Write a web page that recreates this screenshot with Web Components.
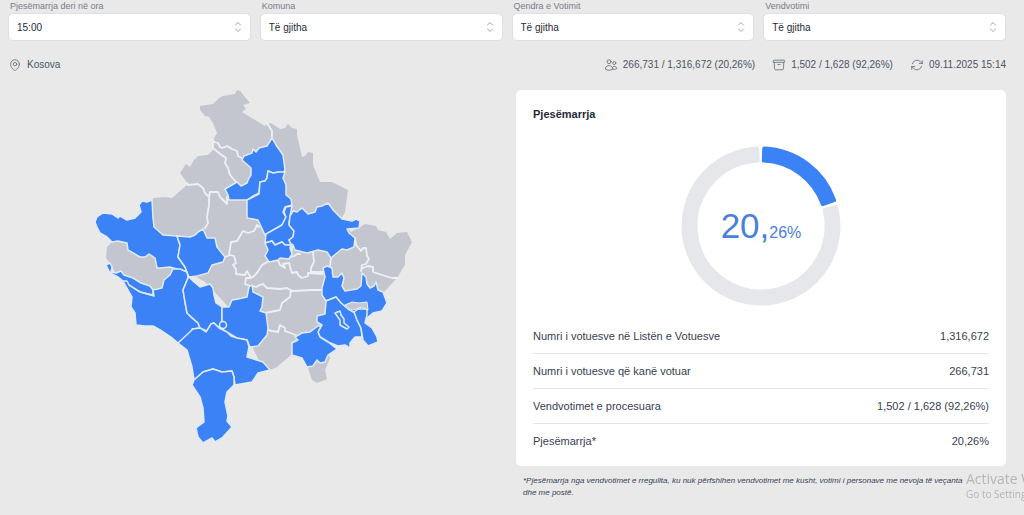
<!DOCTYPE html>
<html lang="sq">
<head>
<meta charset="utf-8">
<title>Pjesëmarrja</title>
<style>
html { height: 100%; background: #e9e9e9; }
body { margin: 0; font-family: "Liberation Sans", Arial, sans-serif; color: #374151; }
</style>
</head>
<body>
<turnout-page></turnout-page>
<script>
function define(name, html, setup) {
  const template = document.createElement('template');
  template.innerHTML = html;
  customElements.define(name, class extends HTMLElement {
    constructor() {
      super();
      this.attachShadow({ mode: 'open' }).append(template.content.cloneNode(true));
    }
    connectedCallback() { if (setup) setup(this, this.shadowRoot); }
  });
}

/* Labelled drop-down */
define('filter-field', `
<style>
:host { display: flex; flex-direction: column; gap: 1px; min-width: 0; }
label { font-size: 9px; line-height: 12px; padding-left: 2px; color: #777d89; }
.box { display: grid; align-items: center; }
.box > * { grid-area: 1 / 1; }
select { appearance: none; width: 100%; height: 28px; margin: 0; padding: 0 24px 0 8px; border: 1px solid #dfe0e3;
  border-radius: 5px; background: #fff; color: #1f2937; font: 10px "Liberation Sans", Arial, sans-serif; }
svg { justify-self: end; margin-right: 8px; pointer-events: none; }
</style>
<label for="s"></label>
<div class="box"><select id="s"><option></option></select>
<svg width="10" height="12" viewBox="0 0 10 12" fill="none" stroke="#9ca3af" stroke-linecap="round" stroke-linejoin="round"><path d="M2.5 4 5 1.5 7.500 4M2.500 8 5 10.500 7.500 8"/></svg></div>`,
(host, root) => {
  root.querySelector('label').textContent = host.getAttribute('label');
  root.querySelector('option').textContent = host.getAttribute('value');
});

/* Icon and text pair */
const icons = {
  pin: '<path d="M15 10.500a3 3 0 1 1-6 0 3 3 0 0 1 6 0Z"/><path d="M19.500 10.500c0 7.142-7.500 11.250-7.500 11.250S4.500 17.642 4.500 10.500a7.500 7.500 0 1 1 15 0Z"/>',
  users: '<path d="M15 19.128a9.380 9.380 0 0 0 2.625.372 9.337 9.337 0 0 0 4.121-.952 4.125 4.125 0 0 0-7.533-2.493M15 19.128v-.003c0-1.113-.285-2.160-.786-3.070M15 19.128v.106A12.318 12.318 0 0 1 8.624 21c-2.331 0-4.512-.645-6.374-1.766l-.001-.109a6.375 6.375 0 0 1 11.964-3.070M12 6.375a3.375 3.375 0 1 1-6.750 0 3.375 3.375 0 0 1 6.750 0Zm8.250 2.250a2.625 2.625 0 1 1-5.250 0 2.625 2.625 0 0 1 5.250 0Z"/>',
  box: '<path d="m20.250 7.500-.625 10.632a2.250 2.250 0 0 1-2.247 2.118H6.622a2.250 2.250 0 0 1-2.247-2.118L3.750 7.500M10 11.250h4M3.375 7.500h17.250c.621 0 1.125-.504 1.125-1.125v-1.500c0-.621-.504-1.125-1.125-1.125H3.375c-.621 0-1.125.504-1.125 1.125v1.500c0 .621.504 1.125 1.125 1.125Z"/>',
  sync: '<path d="M16.023 9.348h4.992v-.001M2.985 19.644v-4.992m0 0h4.992m-4.993 0 3.181 3.183a8.250 8.250 0 0 0 13.803-3.700M4.031 9.865a8.250 8.250 0 0 1 13.803-3.700l3.181 3.182m0-4.991v4.990"/>'
};
define('status-item', `
<style>
:host { display: flex; align-items: center; gap: 5px; font-size: 10px; line-height: 14px; color: #4b5563; white-space: nowrap; }
svg { width: 14px; height: 14px; fill: none; stroke: #6b7280; stroke-width: 1.5; stroke-linecap: round; stroke-linejoin: round; }
</style>
<svg viewBox="0 0 24 24" aria-hidden="true"></svg><span><slot></slot></span>`,
(host, root) => { root.querySelector('svg').innerHTML = icons[host.getAttribute('icon')]; });

/* Map of the municipalities: grey country, reported areas in blue, borders on top */
define('kosovo-map', `
<style>
:host { display: block; }
svg { display: block; width: 100%; height: auto; stroke-linejoin: round; stroke-linecap: round; }
.land { fill: #c3c6ce; stroke: none; }
.done { fill: #3b82f6; stroke: #dfeafb; stroke-width: 1.5; }
.line { fill: none; stroke: #eef0f4; stroke-width: 1.8; }
.enclave { fill: #c3c6ce; stroke: #eef0f4; }
</style>
<svg viewBox="8 90 490 354" role="img" aria-label="Kosova">
<g class="land">
<path d="M200 106 213 104 219 98 223 96 235 94 237 90 240 91 250 103 243 105 246 109 242 112 265 126 267 124 271 123 280 129 285 128 288 124 292 128 297 129 297 135 302 157 305 156 308 152 313 153 313 165 320 182 332 182 348 190 345 212 341 219 351 232 360 227 365 224 376 226 378 230 386 232 390 239 397 233 407 232 412 242 405 255 405 265 397 278 385 291 378 298 365 308 350 315 330 330 312 345 292 345 291 355 277 367 270 370 258 359 240 320 222 300 205 282 188 272 170 277 162 288 154 290 140 284 124 276 115 273 112 266 106 258 107 247 112 242 128 240 150 240 150 215 153 198 165 197 172 198 180 191 188 184 180 173 186 164 190 167 194 160 198 156 208 155 213 150 213 140 217 133 213 123 209 117 205 116 200 110Z"/>
<path d="M307 365 312 380 317 383 327 379 325 370 330 358 328 352Z"/>
</g>
<g class="line">
<path d="M267 123 272 131 272 138M213 140 214 142 218 143 220 147 222 148 227 146 232 149 237 151 238 156 242 158M213 141 213 148 219 153 226 158 225 163 228 168 230 175 236 182M187 183 188 185 198 184 203 188 205 193 209 197 210 192 218 192 220 197 227 204 227 197M209 197 209 205 207 217 208 223 205 228"/>
<path d="M259 227 257 225 254 231 248 233 243 231 240 236 237 241 231 242 229 255M225 257 230 255 234 256 236 263 233 265 236 269 236 274 245 275 247 271 251 278 254 276 257 273 262 265 269 261 278 260 280 265 285 268 283 264 289 263 291 270 292 273 297 272 298 275 302 278 308 276 308 273 322 274 324 270M251 278 246 278 245 284 250 286M292 247 291 257 294 256 297 254 300 254M313 252 314 262 311 268 311 272M312 272 322 272M331 258 330 266"/>
<path d="M252 286 256 287 260 285 263 284 267 288 280 289 287 288 292 291 312 290 323 290M291 290 290 297 282 303 280 310 270 312 265 313M267 330 272 331 278 332 280 325 285 328 285 331 296 335 298 340 292 343"/>
<path d="M355 238 356 245 361 251 363 248 366 248 367 256 369 259 366 264 362 265 361 271M363 268 368 266 373 267 373 272 382 275 392 278 397 278"/>
</g>
<g class="done">
<path d="M272 138 276 145 283 155 285 170 283 173 279 172 273 173 268 171 267 178 265 181 260 182 259 193 253 196 247 200 240 200 229 200 228 195 225 189 232 185 237 182 241 186 247 183 249 178 251 175 251 168 242 160 244 156 252 153 253 149 256 152 259 148 267 146Z"/>
<path d="M285 172 283 178 286 185 286 195 291 199 292 205 285 207 283 212 286 217 282 225 265 235 258 220 247 218 247 200 253 197 259 194 260 182 265 181 267 178 268 171 273 173 279 172Z"/>
<path d="M292 206 286 207 284 212 286 217 282 225 266 234 265 243 272 241 275 245 282 242 285 245 291 245 289 240 293 237 294 231 289 224 290 216Z"/>
<path d="M265 243 272 241 275 245 282 242 285 245 291 245 290 248 292 254 289 259 280 258 278 260 269 262 265 256 268 250Z"/>
<path d="M293 211 297 212 302 208 308 214 315 212 317 207 322 206 328 203 334 211 342 219 352 221 356 219 360 221 359 228 347 229 349 233 355 238 354 247 347 250 342 249 337 253 331 258 327 252 318 250 307 253 295 250 293 245 291 244 289 240 293 237 294 231 289 225 290 216Z"/>
<path d="M95 222 97 217 103 213 112 214 118 218 120 216 127 220 135 218 141 212 139 205 142 201 147 202 152 200 153 218 154 227 163 235 177 236 180 245 178 257 185 267 187 272 170 267 160 268 157 268 155 258 149 254 145 257 140 257 128 250 127 243 118 241 112 242 107 237 100 233 97 227Z"/>
<path d="M106 265 110 263 112 267 111 272 116 273 121 271 124 275 133 278 141 283 150 286 153 290 153 295 140 292 127 285 123 281 118 277 110 273Z"/>
<path d="M123 281 127 281 129 285 140 292 154 296 153 290 162 288 164 280 170 275 173 269 180 269 187 272 188 278 183 290 185 302 187 313 193 319 198 323 200 328 192 329 192 333 178 343 171 337 162 331 153 326 145 326 136 325 135 313 131 307 132 297Z"/>
<path d="M177 236 190 237 195 235 198 232 203 229 207 238 215 238 217 247 225 257 223 262 212 265 208 273 197 276 189 277 187 272 185 267 178 257 180 245Z"/>
<path d="M189 277 194 282 200 287 210 284 213 288 214 295 216 303 222 307 222 320 219 328 214 323 211 324 207 331 200 328 198 323 187 313 185 302 183 290 188 278Z"/>
<path d="M222 307 229 307 232 300 238 299 247 297 249 287 252 285 253 292 263 297 262 307 260 311 266 313 268 328 267 335 258 346 250 347 247 340 237 338 223 330 222 320Z"/>
<path d="M178 343 193 329 200 328 206 332 211 324 214 323 219 328 227 332 231 336 237 338 247 340 249 347 247 357 263 362 270 370 258 373 252 382 235 385 234 377 232 371 222 372 213 369 203 372 194 380 192 367 187 350Z"/>
<path d="M194 380 203 372 213 369 222 372 232 371 234 377 234 385 227 392 225 402 228 416 227 421 232 427 222 438 215 442 212 438 203 443 198 437 196 428 204 422 203 408 200 397 192 385Z"/>
<circle cx="223" cy="325" r="3.500"/>
<path d="M323 268 327 266 332 268 333 277 338 277 342 273 344 278 342 286 345 291 357 289 361 286 362 273 366 277 367 284 370 288 374 286 376 282 378 290 383 292 387 303 382 311 373 313 367 318 360 316 355 313 348 310 340 302 336 297 326 301 322 295 322 288 325 277Z"/>
<path d="M326 301 336 297 341 303 348 309 355 313 357 320 361 328 362 337 355 337 350 343 350 348 345 345 338 346 328 342 320 337 318 332 322 325 317 322 317 316 325 314Z"/>
<path d="M354 312 358 309 367 309 367 315 365 323 372 328 377 337 378 342 368 346 363 340 361 328 357 320Z"/>
<path d="M292 343 298 340 295 337 302 333 310 332 318 326 321 326 318 332 320 337 328 342 337 349 328 355 325 362 320 363 317 360 313 366 307 367 302 358 292 355Z"/>
<path d="M335 313 340 311 341 315 344 319 344 323 349 327 347 329 340 325 340 320Z"/>
</g>
<path class="enclave" d="M345 305 352 302 359 303 367 302 368 310 362 307 353 310Z"/>
</svg>`);

/* Ring chart: the slotted text sits in its middle */
define('turnout-ring', `
<style>
:host { display: grid; place-items: center; color: #4a80dc; }
svg, div { grid-area: 1 / 1; }
svg { width: 160px; height: 160px; }
path { stroke-width: 4; stroke-linejoin: round; }
.rest { fill: #e5e7eb; stroke: #e5e7eb; }
.part { fill: #3b82f6; stroke: #3b82f6; }
</style>
<svg viewBox="-80 -80 160 160" aria-hidden="true"><path class="rest"/><path class="part"/></svg>
<div><slot></slot></div>`,
(host, root) => {
  const point = (r, deg) => {
    const a = (deg - 90) * Math.PI / 180;
    return (r * Math.cos(a)).toFixed(2) + ' ' + (r * Math.sin(a)).toFixed(2);
  };
  const band = (from, to) => {
    const big = to - from > 180 ? 1 : 0;
    return `M${point(77.5, from)}A77.5 77.5 0 ${big} 1 ${point(77.5, to)}L${point(65.5, to)}A65.5 65.5 0 ${big} 0 ${point(65.5, from)}Z`;
  };
  const end = host.getAttribute('value') * 3.6;
  root.querySelector('.part').setAttribute('d', band(2.4, end - 2.4));
  root.querySelector('.rest').setAttribute('d', band(end + 2.8, 357.2));
});

define('turnout-card', `
<style>
:host { display: block; box-sizing: border-box; background: #fff; border-radius: 5px; padding: 17px 17px 8px; }
h2 { margin: 0 0 24px; font-size: 11px; line-height: 15px; color: #1f2937; }
.big { font-size: 35px; line-height: 40px; }
.small { font-size: 16px; }
table { width: 100%; margin-top: 13px; border-collapse: collapse; font-size: 11px; line-height: 14px; }
th, td { height: 34px; padding: 0; font-weight: 400; }
th { text-align: left; }
td { text-align: right; }
tr + tr { border-top: 1px solid #e5e7eb; }
</style>
<h2>Pjesëmarrja</h2>
<turnout-ring value="20.26"><span class="big">20,</span><span class="small">26%</span></turnout-ring>
<table>
<tr><th scope="row">Numri i votuesve në Listën e Votuesve</th><td>1,316,672</td></tr>
<tr><th scope="row">Numri i votuesve që kanë votuar</th><td>266,731</td></tr>
<tr><th scope="row">Vendvotimet e procesuara</th><td>1,502 / 1,628 (92,26%)</td></tr>
<tr><th scope="row">Pjesëmarrja*</th><td>20,26%</td></tr>
</table>`);

/* System notice that lies over the page's lower right corner */
define('activation-notice', `
<style>
:host { position: fixed; right: 0; bottom: 14px; width: 58px; overflow: hidden; white-space: nowrap; pointer-events: none;
  font-family: "Open Sans", sans-serif; color: #b4b5b7; }
p { margin: 0; font-size: 14px; line-height: 17px; }
p + p { font-size: 10px; line-height: 14px; }
</style>
<p>Activate W</p><p>Go to Setting</p>`);

define('turnout-page', `
<style>
:host { display: block; padding: 0 18px 0 8px; }
.filters { display: grid; grid-template-columns: repeat(4, 1fr); gap: 9px; }
.status { display: flex; align-items: center; gap: 17px; padding: 17px 0 0; }
.status :first-child { margin-right: auto; }
.main { display: grid; grid-template-columns: 1fr 1fr; gap: 18px; margin-top: 18px; align-items: start; }
.note { margin: 9px 7px 0; font-size: 8px; line-height: 12px; font-style: italic; color: #374151; }
</style>
<div class="filters">
<filter-field label="Pjesëmarrja deri në ora" value="15:00"></filter-field>
<filter-field label="Komuna" value="Të gjitha"></filter-field>
<filter-field label="Qendra e Votimit" value="Të gjitha"></filter-field>
<filter-field label="Vendvotimi" value="Të gjitha"></filter-field>
</div>
<div class="status">
<status-item icon="pin">Kosova</status-item>
<status-item icon="users">266,731 / 1,316,672 (20,26%)</status-item>
<status-item icon="box">1,502 / 1,628 (92,26%)</status-item>
<status-item icon="sync">09.11.2025 15:14</status-item>
</div>
<div class="main">
<kosovo-map></kosovo-map>
<div>
<turnout-card></turnout-card>
<p class="note">*Pjesëmarrja nga vendvotimet e rregullta, ku nuk përfshihen vendvotimet me kusht, votimi i personave me nevoja të veçanta<br>dhe me postë.</p>
</div>
</div>
<activation-notice></activation-notice>`);
</script>
</body>
</html>
